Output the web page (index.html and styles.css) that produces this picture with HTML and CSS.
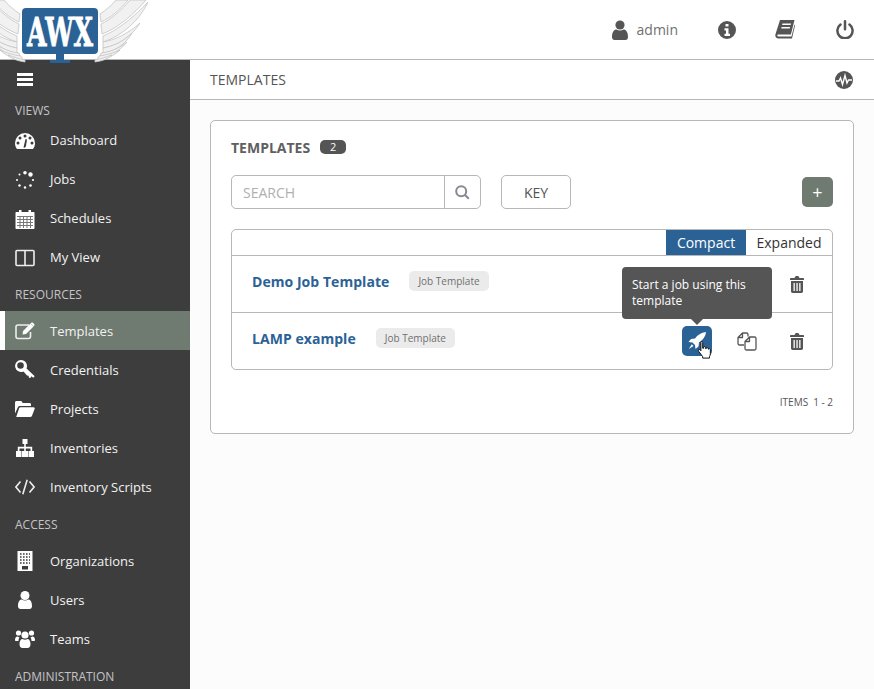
FILE: index.html
```html
<!DOCTYPE html>
<html lang="en">
<head>
  <meta charset="UTF-8">
  <title>AWX Templates</title>
  <link rel="stylesheet" href="styles.css">
</head>
<body>
  <header class="top">
    <svg class="logo" width="150" height="64" viewBox="0 0 150 64">
      <defs>
        <g id="wing">
          <path d="M103 36C118 30 135 16 148 2C140 20 122 36 103 42z"/>
          <path d="M101 24C110 20 122 10 130 0H146C134 14 118 28 102 34z"/>
          <path d="M100 14C106 10 112 5 116 0H128C120 10 110 18 101 22z"/>
          <path d="M103 42C116 40 130 32 140 23C132 36 118 46 103 48z"/>
          <path d="M103 48C114 46 124 41 132 33C126 44 114 52 103 53z"/>
          <path d="M101 53C110 52 120 48 127 42C120 51 110 56 100 57z"/>
          <path d="M99 56C106 55 114 53 120 50C114 56 106 59 97 60z"/>
          <path d="M95 60C100 59 106 57 112 55C108 59 102 61 95 62z"/>
        </g>
      </defs>
      <use class="wing" href="#wing"/>
      <use class="wing" href="#wing" transform="translate(120 0) scale(-1 1)"/>
      <rect class="logo-box" x="22" y="8" width="76" height="46" rx="4"/>
      <path class="logo-box" d="M56 54h8v6h6v3H50v-3h6z"/>
      <text class="logo-text" x="27" y="46" textLength="66" lengthAdjust="spacingAndGlyphs">AWX</text>
    </svg>
    <div class="top-right">
      <svg class="top-icon user-icon" width="16" height="20" viewBox="0 0 16 20"><circle cx="8" cy="5" r="4.600"/><path d="M0 17c0-5 2-7.500 4.500-7.500 1 .7 2.200 1.100 3.500 1.100s2.500-.4 3.500-1.100C14 9.500 16 12 16 17c0 1.700-1 3-2.600 3H2.600C1 20 0 18.700 0 17z"/></svg>
      <span class="admin">admin</span>
      <svg class="top-icon info-icon" width="18" height="18" viewBox="0 0 18 18"><path fill-rule="evenodd" d="M9 0a9 9 0 1 0 0 18A9 9 0 0 0 9 0zM7.500 3h3v2.500h-3zM6.500 7.300h4v5.500H12V15H6.500v-2.200H8V9.500H6.500z"/></svg>
      <svg class="top-icon book-icon" width="20" height="19" viewBox="0 0 20 19"><path fill-rule="evenodd" d="M5 0h14.500l-3.600 14.500H3.500c-.9 0-1.300.6-1.200 1.100.1.500.6.900 1.200.9h13l3-12 .5 1-3 13H3.300C1.500 18.500.2 17 .3 15.200.4 14.500.5 14 .7 13.400zM7.500 3.500l-.4 1.500h8.500l.4-1.500zM6.600 7l-.4 1.500h8.500l.4-1.500z"/></svg>
      <svg class="top-icon power-icon" width="18" height="19" viewBox="0 0 18 19"><path fill="none" stroke-width="2.500" stroke-linecap="round" d="M9 1.300v8M4.500 4.600a7.600 7.600 0 1 0 9 0"/></svg>
    </div>
  </header>

  <div class="page">
    <nav class="side">
      <div class="burger"><span></span><span></span><span></span></div>

      <div class="side-label first">VIEWS</div>
      <a class="side-item">
        <svg width="20" height="18" viewBox="0 0 20 18"><path class="ic" d="M10 1A10 10 0 0 0 0 11c0 2.500.8 4.600 2 6h16c1.200-1.400 2-3.500 2-6A10 10 0 0 0 10 1z"/><g class="ic-dark"><circle cx="10" cy="4" r="1.500"/><circle cx="5" cy="6" r="1.500"/><circle cx="15" cy="6" r="1.500"/><circle cx="3" cy="11" r="1.500"/><circle cx="17" cy="11" r="1.500"/><path d="M8.500 15.500L10.500 7l1.500.5L11 14a2 2 0 0 1-2.500 1.500z"/></g></svg>
        <span>Dashboard</span>
      </a>
      <a class="side-item">
        <svg width="20" height="18" viewBox="0 0 20 18"><g class="ic"><circle cx="10" cy="1.800" r="1.800"/><circle cx="15.500" cy="3.500" r="2.200"/><circle cx="18" cy="9" r="1.100"/><circle cx="15.500" cy="14.500" r="1.300"/><circle cx="10" cy="16.500" r="1.200"/><circle cx="4.500" cy="14.500" r="1.200"/><circle cx="2" cy="9" r="1"/><circle cx="4.500" cy="3.500" r="1"/></g></svg>
        <span>Jobs</span>
      </a>
      <a class="side-item">
        <svg width="20" height="20" viewBox="0 0 20 20"><path class="ic" d="M1.500 3H4V1h2.500v2h7V1H16v2h2.500c.6 0 1 .4 1 1v15c0 .6-.4 1-1 1h-17c-.6 0-1-.4-1-1V4c0-.6.4-1 1-1z"/><path class="ic-line" d="M2 7.500h16M2 10.500h16M2 13.500h16M2 16.500h16M5 7.500V19M8.500 7.500V19M12 7.500V19M15.500 7.500V19"/></svg>
        <span>Schedules</span>
      </a>
      <a class="side-item">
        <svg width="20" height="18" viewBox="0 0 20 18"><path class="ic-stroke" d="M2 1.500h16c.6 0 1 .4 1 1v13c0 .6-.4 1-1 1H2c-.6 0-1-.4-1-1v-13c0-.6.4-1 1-1zM10 1.500v15"/></svg>
        <span>My View</span>
      </a>

      <div class="side-label resources">RESOURCES</div>
      <a class="side-item active">
        <svg width="20" height="18" viewBox="0 0 20 18"><path class="ic-stroke" d="M14 3H3C1.900 3 1 3.900 1 5v9.500c0 1.100.9 2 2 2h10.500c1.100 0 2-.9 2-2V10"/><path class="ic" d="M8 9l7.500-7.500 3 3L11 12l-3.500.5zM16.300.8c.5-.5 1.200-.5 1.600 0l1.300 1.300c.4.400.4 1.100 0 1.600l-.6.6-3-3z"/></svg>
        <span>Templates</span>
      </a>
      <a class="side-item">
        <svg width="20" height="20" viewBox="0 0 20 20"><path class="ic" fill-rule="evenodd" d="M6 0a6 6 0 0 1 5.500 8.400L19.500 16l-.5 1.500-1.500-.2-1-1-1.200 1.700-1.300-.2-.5-2-1.500-.3L8.500 11.500A6 6 0 1 1 6 0zM5.500 2.200a3.300 3.300 0 1 0 0 6.600 3.300 3.300 0 0 0 0-6.600z"/></svg>
        <span>Credentials</span>
      </a>
      <a class="side-item">
        <svg width="20" height="16" viewBox="0 0 20 16"><path class="ic" d="M0 1.500C0 .7.700 0 1.500 0h4.300c.5 0 1 .3 1.200.7L7.600 2h7c.8 0 1.400.6 1.400 1.400V5H5c-1 0-1.700.5-2.100 1.300L0 12.500zM4.200 7c.2-.5.700-.8 1.300-.8h13c.9 0 1.500.8 1.200 1.600l-2.700 7c-.2.700-.7 1.200-1.500 1.200H1.200z"/></svg>
        <span>Projects</span>
      </a>
      <a class="side-item">
        <svg width="20" height="18" viewBox="0 0 20 18"><path class="ic" d="M7.500 0h5v5H10.800v2.800h6.400V12H19v6h-5.500v-6h2v-2.500h-4.700V12H13v6H7v-6h2.200V9.500H4.500V12h2v6H1v-6h1.800V7.800h6.400V5H7.500z"/></svg>
        <span>Inventories</span>
      </a>
      <a class="side-item">
        <svg width="20" height="16" viewBox="0 0 20 16"><path class="ic-stroke" d="M5.500 2.500L.9 8l4.600 5.500M14.500 2.500L19.100 8l-4.600 5.500M12.200.8L7.800 15.200"/></svg>
        <span>Inventory Scripts</span>
      </a>

      <div class="side-label access">ACCESS</div>
      <a class="side-item">
        <svg width="20" height="20" viewBox="0 0 20 20"><path class="ic" d="M2.500 0h15v20h-15z"/><path class="ic-dots" d="M5 3h10M5 6h10M5 9h10M5 12h10"/><path class="ic-dark" d="M7 15h6v3.500H7z"/></svg>
        <span>Organizations</span>
      </a>
      <a class="side-item">
        <svg width="20" height="18" viewBox="0 0 20 18"><circle class="ic" cx="10" cy="4.500" r="4.500"/><path class="ic" d="M3 15c0-4 1.500-6.500 3.800-6.500 1 .6 2 1 3.200 1s2.200-.4 3.200-1C15.500 8.500 17 11 17 15c0 1.700-1 3-2.500 3h-9C4 18 3 16.700 3 15z"/></svg>
        <span>Users</span>
      </a>
      <a class="side-item">
        <svg width="20" height="18" viewBox="0 0 20 18"><g class="ic"><circle cx="3.500" cy="3" r="2.600"/><circle cx="16.500" cy="3" r="2.600"/><circle cx="10" cy="5" r="3.600"/><path d="M0 10c0-2 1-3.500 2.500-3.500.8.500 1.300.7 2 .7-.6 1-1 2.200-1 3.800H1c-.6 0-1-.4-1-1zM20 10c0-2-1-3.500-2.500-3.500-.8.500-1.300.7-2 .7.600 1 1 2.200 1 3.800H19c.6 0 1-.4 1-1zM4.500 14c0-3 1.300-5 3-5 .8.500 1.600.8 2.500.8s1.700-.3 2.500-.8c1.700 0 3 2 3 5 0 2.500-1.200 4-3 4H7.500c-1.800 0-3-1.500-3-4z"/></g></svg>
        <span>Teams</span>
      </a>

      <div class="side-label">ADMINISTRATION</div>
    </nav>

    <main class="main">
      <div class="crumbs">
        <span>TEMPLATES</span>
        <svg class="activity" width="18" height="18" viewBox="0 0 18 18"><circle class="activity-bg" cx="9" cy="9" r="9"/><path class="activity-line" d="M1 10h3l1.500-3 2 6.500L10 4.500l2 7.500 1.500-3H17"/></svg>
      </div>

      <div class="content">
        <section class="card">
          <div class="card-title">
            <span>TEMPLATES</span>
            <span class="count">2</span>
          </div>

          <div class="tools">
            <div class="search">
              <span class="search-text">SEARCH</span>
              <span class="search-btn">
                <svg width="15" height="15" viewBox="0 0 15 15"><path class="search-icon" d="M6.200 1.200a5 5 0 1 0 0 10 5 5 0 0 0 0-10zM9.800 9.800l4 4"/></svg>
              </span>
            </div>
            <button class="key">KEY</button>
            <button class="add">+</button>
          </div>

          <div class="list">
            <div class="list-head">
              <span class="toggle on">Compact</span>
              <span class="toggle">Expanded</span>
            </div>
            <div class="row">
              <a class="row-name">Demo Job Template</a>
              <span class="tag">Job Template</span>
              <div class="actions">
                <span class="act"></span>
                <span class="act"></span>
                <span class="act"><svg width="14" height="17" viewBox="0 0 14 17"><use href="#trash"/></svg></span>
              </div>
            </div>
            <div class="row last">
              <a class="row-name">LAMP example</a>
              <span class="tag">Job Template</span>
              <div class="actions">
                <span class="act launch">
                  <svg width="18" height="18" viewBox="0 0 18 18"><path class="rocket" d="M18 0C13 .5 9.500 3 7 6.500L3 7 .5 10l4 .5L7 13l.5 4 3-2.500.5-4C14.500 8 17.500 5 18 0zM3.800 12.300L.8 17l4.700-3z"/></svg>
                </span>
                <span class="act">
                  <svg width="20" height="19" viewBox="0 0 20 19"><path class="copy" d="M7 13H2.500c-.8 0-1.500-.7-1.500-1.500v-6L5.500 1h4C10.300 1 11 1.700 11 2.500v2M5.500 1v4.500H1M8 16.500v-7L12.500 5h5c.8 0 1.500.7 1.500 1.500v10c0 .8-.7 1.500-1.500 1.500h-8C8.700 18 8 17.300 8 16.500zM12.500 5v4.500H8"/></svg>
                </span>
                <span class="act"><svg width="14" height="17" viewBox="0 0 14 17"><use href="#trash"/></svg></span>
              </div>
            </div>

            <div class="tip">Start a job using this template</div>
            <svg class="hand" width="15" height="18" viewBox="0 0 16 20"><path d="M4 1.500c0-1.300 2-1.300 2 0V8l1 .1V7c0-1.200 1.800-1.200 2 0v1.300l1 .1V8c0-1.200 1.800-1.100 2 .1v.8l.7.2c0-1 1.800-.8 1.800.4v4.500c0 1.500-.5 2.500-1 3.500v1.500H6v-1.500C5 16 3.500 14 1.500 11.500.500 10 2 8.500 3.300 10l.7.8z"/></svg>
          </div>

          <div class="items"><span>ITEMS</span><span>1 - 2</span></div>
        </section>
      </div>
    </main>
  </div>

  <svg class="defs" width="0" height="0">
    <symbol id="trash" viewBox="0 0 14 17">
      <path fill="#555" fill-rule="evenodd" d="M4.500 2l.8-1.500c.1-.3.400-.5.700-.5h2c.3 0 .6.200.7.500L9.500 2H13c.6 0 1 .4 1 1v1H0V3c0-.6.400-1 1-1zM1 5h12v10.300c0 1-.7 1.700-1.600 1.700H2.600C1.700 17 1 16.300 1 15.300zM3.500 7v8h1.300V7zM6.400 7v8h1.300V7zM9.200 7v8h1.300V7z"/>
    </symbol>
  </svg>
</body>
</html>
```

FILE: styles.css
```css
* {
  box-sizing: border-box;
}

body {
  margin: 0;
  height: 100vh;
  overflow: hidden;
  font-family: "Open Sans", "Noto Sans", sans-serif;
  font-size: 14px;
  color: #555;
  background: #fff;
}

/* top bar */
.top {
  height: 60px;
  display: flex;
  justify-content: space-between;
  border-bottom: 1px solid #b7b7b7;
  background: #fff;
}

.logo {
  position: relative;
  z-index: 2;
  overflow: visible;
}

.wing {
  fill: #f1f1f1;
  stroke: #c4c4c4;
  stroke-width: 0.8;
}

.logo-box {
  fill: #2b6296;
}

.logo-text {
  font-family: "DejaVu Serif", serif;
  font-weight: bold;
  font-size: 40px;
  fill: #fff;
  stroke: #fff;
  stroke-width: 0.8;
}

.top-right {
  display: flex;
  align-items: center;
  padding-right: 20px;
}

.top-icon {
  fill: #555;
  stroke: #555;
  stroke-width: 0;
}

.power-icon {
  margin-left: 41px;
  stroke-width: 1;
}

.user-icon {
  margin-right: 9px;
}

.admin {
  color: #707070;
}

.info-icon {
  margin-left: 40px;
}

.book-icon {
  margin-left: 39px;
}

.page {
  display: flex;
  height: calc(100vh - 60px);
}

/* sidebar */
.side {
  width: 190px;
  flex: none;
  background: #3d3d3d;
  color: #fff;
  overflow: hidden;
}

.burger {
  height: 39px;
  padding: 13px 0 0 17px;
}

.burger span {
  display: block;
  width: 16px;
  height: 3px;
  margin-bottom: 2px;
  background: #fff;
}

.side-label {
  height: 34px;
  padding-left: 15px;
  display: flex;
  align-items: center;
  font-size: 12px;
  color: #c4c4c4;
}

.side-label.first {
  height: 22px;
}

.side-label.access {
  height: 35px;
}

.resources ~ .side-label {
  padding-top: 2px;
}

.side-item {
  height: 39px;
  display: flex;
  align-items: center;
  padding-left: 15px;
  color: #f2f2f2;
  font-size: 13px;
}

.side-item span {
  margin-bottom: 1px;
}

.resources ~ .side-item span {
  margin: 1px 0 0;
}

.side-item svg {
  flex: none;
  width: 20px;
  margin-right: 15px;
}

.side-item.active {
  background: #6f7a70;
  border-left: 5px solid #fff;
  padding-left: 10px;
}

.ic {
  fill: #fff;
}

.ic-dark {
  fill: #3d3d3d;
}

.ic-line {
  fill: none;
  stroke: #777;
  stroke-width: 1;
}

.ic-dots {
  fill: none;
  stroke: #3d3d3d;
  stroke-width: 1.600;
  stroke-dasharray: 1.600 1.400;
}

.ic-stroke {
  fill: none;
  stroke: #eee;
  stroke-width: 1.600;
}

/* main column */
.main {
  flex: 1;
  background: #fcfcfc;
  min-width: 0;
}

.crumbs {
  height: 40px;
  display: flex;
  align-items: center;
  justify-content: space-between;
  padding: 0 21px 0 20px;
  border-bottom: 1px solid #b7b7b7;
  background: #fff;
}

.activity-bg {
  fill: #555;
}

.activity-line {
  fill: none;
  stroke: #fff;
  stroke-width: 1.400;
}

.content {
  padding: 20px;
}

.card {
  height: 314px;
  padding: 16px 20px 0;
  border: 1px solid #b7b7b7;
  border-radius: 5px;
  background: #fff;
}

.card-title {
  height: 20px;
  display: flex;
  align-items: center;
  gap: 10px;
  font-weight: 700;
  color: #606060;
}

.count {
  width: 26px;
  height: 14px;
  border-radius: 5px;
  background: #555;
  color: #fff;
  font-size: 11px;
  font-weight: 400;
  line-height: 14px;
  text-align: center;
}

.tools {
  display: flex;
  align-items: center;
  margin-top: 18px;
}

.search {
  width: 250px;
  height: 34px;
  display: flex;
  border: 1px solid #b7b7b7;
  border-radius: 5px;
}

.search-text {
  flex: 1;
  padding-left: 11px;
  line-height: 33px;
  color: #b0b0b0;
}

.search-btn {
  width: 36px;
  display: flex;
  align-items: center;
  justify-content: center;
  border-left: 1px solid #b7b7b7;
}

.search-icon {
  fill: none;
  stroke: #848992;
  stroke-width: 2;
}

.key {
  width: 70px;
  height: 34px;
  margin-left: 20px;
  border: 1px solid #b7b7b7;
  border-radius: 5px;
  background: #fff;
  color: #555;
  font: 14px "Open Sans", sans-serif;
}

.add {
  width: 31px;
  height: 30px;
  margin-left: auto;
  padding: 0;
  border: none;
  border-radius: 5px;
  background: #6f7a70;
  color: #fff;
  font: 18px "Open Sans", sans-serif;
}

/* list */
.list {
  position: relative;
  height: 141px;
  margin-top: 20px;
  border: 1px solid #b7b7b7;
  border-radius: 5px;
}

.list-head {
  height: 26px;
  display: flex;
  justify-content: flex-end;
  border-bottom: 1px solid #b7b7b7;
}

.toggle {
  width: 86px;
  text-align: center;
  line-height: 25px;
  color: #333;
}

.toggle.on {
  width: 80px;
  background: #2b6296;
  color: #fff;
}

.row {
  height: 57px;
  display: flex;
  align-items: center;
  gap: 20px;
  padding-left: 20px;
  border-bottom: 1px solid #b7b7b7;
}

.row.last {
  height: 56px;
  border-bottom: none;
}

.row-name {
  margin-bottom: 6px;
  font-weight: 700;
  color: #2b6296;
  letter-spacing: 0.05px;
}

.tag {
  height: 20px;
  margin-bottom: 6px;
  padding: 0 9px;
  border-radius: 5px;
  background: #ebebeb;
  color: #707070;
  font-size: 10px;
  line-height: 20px;
}

.actions {
  display: flex;
  gap: 20px;
  margin-left: auto;
  padding-right: 20px;
}

.act {
  width: 30px;
  height: 30px;
  display: flex;
  align-items: center;
  justify-content: center;
  border-radius: 5px;
}

.launch {
  background: #2b6296;
}

.rocket {
  fill: #fff;
}

.copy {
  fill: none;
  stroke: #555;
  stroke-width: 1.300;
  stroke-linejoin: round;
}

.tip {
  position: absolute;
  top: 37px;
  left: 390px;
  width: 150px;
  height: 52px;
  padding: 10px 10px;
  border-radius: 4px;
  background: #555;
  color: #fff;
  font-size: 12px;
  line-height: 16px;
}

.tip::after {
  content: "";
  position: absolute;
  left: 69px;
  bottom: -6px;
  border: 6px solid transparent;
  border-bottom: none;
  border-top-color: #555;
}

.hand {
  position: absolute;
  left: 465px;
  top: 111px;
  fill: #fff;
  stroke: #111;
  stroke-width: 1.100;
}

.items {
  display: flex;
  justify-content: flex-end;
  gap: 5px;
  margin-top: 25px;
  font-size: 10px;
  line-height: 14px;
  color: #555;
}

.defs {
  position: absolute;
}
```
